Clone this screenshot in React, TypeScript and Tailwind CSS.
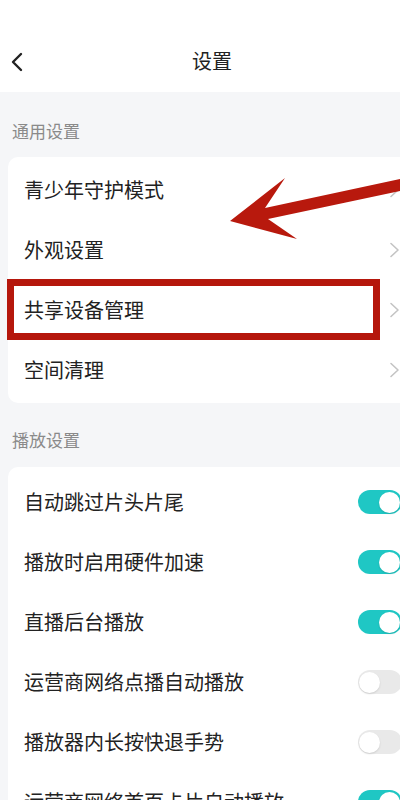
import React from "react";

const Chevron = () => (
  <svg width="14" height="16" viewBox="0 0 14 16" fill="none">
    <path d="M3 1.5 L10 8 L3 14.5" stroke="#c4c4c4" strokeWidth="1.6" strokeLinecap="round" strokeLinejoin="round" />
  </svg>
);

const Toggle = ({ on }: { on: boolean }) => (
  <div
    className={
      on
        ? "w-[44px] h-[24px] rounded-full bg-[#1fc7c4] flex items-center justify-end px-[2px]"
        : "w-[44px] h-[24px] rounded-full bg-[#e9e9e9] flex items-center justify-start px-[1px]"
    }
  >
    <div className="w-[21px] h-[21px] rounded-full bg-white shadow-[0_1px_2px_rgba(0,0,0,0.12)]" />
  </div>
);

const NavRow = ({ label }: { label: string }) => (
  <div className="h-[60px] flex items-center justify-between pl-4 pr-[8px]">
    <span className="text-[20px] leading-[28px] text-[#222]">{label}</span>
    <Chevron />
  </div>
);

const ToggleRow = ({ label, on }: { label: string; on: boolean }) => (
  <div className="h-[60px] flex items-center justify-between pl-4 pr-[8px]">
    <span className="text-[20px] leading-[28px] text-[#222]">{label}</span>
    <Toggle on={on} />
  </div>
);

export default function App() {
  return (
    <div className="relative w-[400px] h-[800px] overflow-hidden bg-[#f5f6f8] font-['Noto_Sans_CJK_SC',sans-serif]">
      <div className="h-[92px] bg-white relative flex items-end pb-[18px]">
        <div className="pl-[10px] flex items-center h-[24px]">
          <svg width="14" height="20" viewBox="0 0 14 20" fill="none">
            <path d="M11 2 L3 10 L11 18" stroke="#222" strokeWidth="2.4" strokeLinecap="round" strokeLinejoin="round" />
          </svg>
        </div>
        <div className="absolute left-0 right-0 bottom-[17px] flex justify-center pl-[24px]">
          <span className="text-[20px] leading-[28px] text-[#222]">设置</span>
        </div>
      </div>

      <div className="px-3 pt-[27px] pb-[14px] text-[17px] leading-[24px] text-[#8a8a8a]">通用设置</div>
      <div className="ml-2 w-[402px] bg-white rounded-[10px] py-[3px]">
        <NavRow label="青少年守护模式" />
        <NavRow label="外观设置" />
        <NavRow label="共享设备管理" />
        <NavRow label="空间清理" />
      </div>

      <div className="px-3 pt-[25px] pb-[15px] text-[17px] leading-[24px] text-[#8a8a8a]">播放设置</div>
      <div className="ml-2 w-[402px] bg-white rounded-[10px] pt-[5px]">
        <ToggleRow label="自动跳过片头片尾" on />
        <ToggleRow label="播放时启用硬件加速" on />
        <ToggleRow label="直播后台播放" on />
        <ToggleRow label="运营商网络点播自动播放" on={false} />
        <ToggleRow label="播放器内长按快退手势" on={false} />
        <ToggleRow label="运营商网络首页卡片自动播放" on />
      </div>

      <div className="absolute left-[7px] top-[279px] w-[373px] h-[61px] border-[7px] border-[#b5170c] pointer-events-none" />

      <svg className="absolute left-0 top-0 pointer-events-none" width="400" height="800" viewBox="0 0 400 800">
        <polygon
          points="230,221 285,178 265,208 400,179 400,191 268,219 297,239"
          fill="#b8190d"
        />
      </svg>
    </div>
  );
}
